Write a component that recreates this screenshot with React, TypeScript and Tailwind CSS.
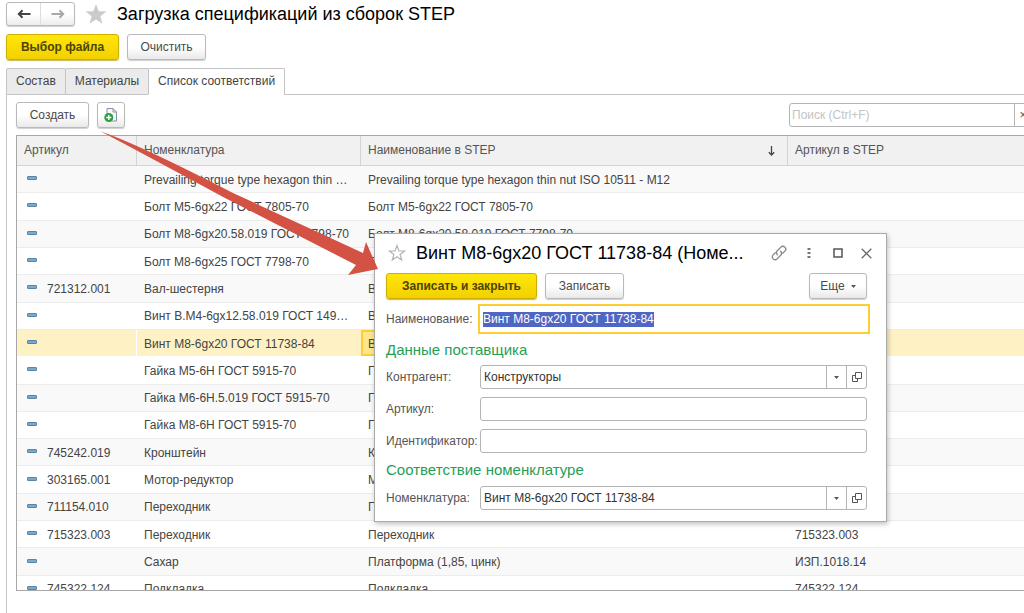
import React, { useEffect, useRef, useState } from "react";

interface Match {
    article: string;
    item: string;
    stepName: string;
    stepArticle: string;
}

const same = (item: string, article = ""): Match => ({
    article,
    item,
    stepName: item,
    stepArticle: article,
});

const matches: Match[] = [
    {
        article: "",
        item: "Prevailing torque type hexagon thin nut ISO 10511 - M12",
        stepName: "Prevailing torque type hexagon thin nut ISO 10511 - M12",
        stepArticle: "",
    },
    same("Болт М5-6gx22 ГОСТ 7805-70"),
    same("Болт М8-6gx20.58.019 ГОСТ 7798-70"),
    same("Болт М8-6gx25 ГОСТ 7798-70"),
    same("Вал-шестерня", "721312.001"),
    same("Винт В.М4-6gx12.58.019 ГОСТ 1491-80"),
    same("Винт М8-6gx20 ГОСТ 11738-84"),
    same("Гайка М5-6Н ГОСТ 5915-70"),
    same("Гайка М6-6Н.5.019 ГОСТ 5915-70"),
    same("Гайка М8-6Н ГОСТ 5915-70"),
    same("Кронштейн", "745242.019"),
    same("Мотор-редуктор", "303165.001"),
    same("Переходник", "711154.010"),
    same("Переходник", "715323.003"),
    {
        article: "",
        item: "Сахар",
        stepName: "Платформа (1,85, цинк)",
        stepArticle: "ИЗП.1018.14",
    },
    same("Подкладка", "745322.124"),
];

const tabs = ["Состав", "Материалы", "Список соответствий"];

const grayButton =
    "h-[26px] rounded-[3px] border border-[#b9b9b9] bg-linear-to-b from-white from-50% to-[#e9e9e9] text-[12px] text-[#4a4a4a] shadow-[0_1px_1px_#d0d0d0]";
const yellowButton =
    "h-[26px] rounded-[3px] border border-[#cfae00] bg-linear-to-b from-[#ffe60a] to-[#f2d000] text-[12px] font-bold text-[#4d4400] shadow-[0_1px_1px_#c8b75a]";

const Arrow: React.FC<{ back?: boolean }> = ({ back }) => (
    <svg
        viewBox="0 0 14 10"
        className={`h-[10px] w-[14px] ${back ? "text-[#444]" : "rotate-180 text-[#a8a8a8]"}`}
        fill="none"
        stroke="currentColor"
        strokeWidth="2"
    >
        <path d="M13.500 5H2M5.500 1.200 1.800 5l3.700 3.800" />
    </svg>
);

const OpenIcon: React.FC = () => (
    <svg viewBox="0 0 10 10" className="h-[10px] w-[10px]" fill="none" stroke="#555">
        <path d="M3.500 .5h6v6h-6z" />
        <path d="M3 3.500H.5v6h5V7" />
    </svg>
);

const CaretIcon: React.FC = () => (
    <svg viewBox="0 0 5 3" className="h-[3px] w-[5px]" fill="#555">
        <path d="M0 0h5L2.500 3z" />
    </svg>
);

interface FieldProps {
    id: string;
    label: string;
    defaultValue?: string;
    picker?: boolean;
}

const Field: React.FC<FieldProps> = ({ id, label, defaultValue = "", picker }) => (
    <div className="flex items-center">
        <label htmlFor={id} className="w-[94px] shrink-0 whitespace-nowrap text-[#555]">
            {label}
        </label>
        <div className="mr-[7px] flex h-6 flex-1 overflow-hidden rounded-[3px] border border-[#b4b4b4] bg-white">
            <input
                id={id}
                type="text"
                defaultValue={defaultValue}
                className="min-w-0 flex-1 px-[3px] text-[#333] outline-none"
            />
            {picker && (
                <>
                    <button
                        type="button"
                        aria-label="Выбрать"
                        className="flex w-5 items-center justify-center border-l border-[#b4b4b4]"
                    >
                        <CaretIcon />
                    </button>
                    <button
                        type="button"
                        aria-label="Открыть"
                        className="flex w-5 items-center justify-center border-l border-[#b4b4b4]"
                    >
                        <OpenIcon />
                    </button>
                </>
            )}
        </div>
    </div>
);

const MatchDialog: React.FC = () => {
    const nameRef = useRef<HTMLInputElement>(null);

    useEffect(() => {
        nameRef.current?.focus();
        nameRef.current?.select();
    }, []);

    return (
        <div
            role="dialog"
            aria-labelledby="dialog-title"
            className="absolute left-[374px] top-[233px] w-[513px] border border-[#aaa] bg-white pb-[11px] pl-[11px] pr-3 shadow-[1px_2px_5px_rgba(0,0,0,0.25)]"
        >
            <div className="flex h-[38px] items-center text-[#666]">
                <button type="button" aria-label="В избранное" className="ml-[2px]">
                    <svg
                        viewBox="0 0 18 18"
                        className="h-[18px] w-[18px]"
                        fill="none"
                        stroke="#b0b5ba"
                        strokeWidth="1.200"
                    >
                        <path d="m9 1.500 1.900 5.400 5.700.1-4.500 3.500 1.600 5.500L9 12.700 4.300 16l1.600-5.500L1.400 7l5.700-.1z" />
                    </svg>
                </button>
                <h2 id="dialog-title" className="ml-[10px] flex-1 whitespace-nowrap text-[18px] text-black">
                    Винт М8-6gx20 ГОСТ 11738-84 (Номе...
                </h2>
                <button type="button" aria-label="Ссылка">
                    <svg
                        viewBox="0 0 16 16"
                        className="h-4 w-4"
                        fill="none"
                        stroke="#888"
                        strokeWidth="1.300"
                        strokeLinecap="round"
                    >
                        <path d="M6.300 9.700a2.800 2.800 0 0 1 0-4l3.600-3.600a2.800 2.800 0 0 1 4 4L11.700 8.300" />
                        <path d="M9.700 6.300a2.800 2.800 0 0 1 0 4l-3.600 3.600a2.800 2.800 0 0 1-4-4L4.300 7.700" />
                    </svg>
                </button>
                <button type="button" aria-label="Меню" className="ml-5">
                    <svg viewBox="0 0 4 12" className="h-3 w-1" fill="#777">
                        <path d="M.5 1h3v2h-3zM.5 5h3v2h-3zM.5 9h3v2h-3z" />
                    </svg>
                </button>
                <button type="button" aria-label="Развернуть" className="ml-[22px]">
                    <svg viewBox="0 0 10 10" className="h-[10px] w-[10px]" fill="none" stroke="#555">
                        <path d="M1 1h8v8H1z" strokeWidth="1.500" />
                    </svg>
                </button>
                <button type="button" aria-label="Закрыть" className="ml-[18px] mr-[2px]">
                    <svg viewBox="0 0 11 11" className="h-[11px] w-[11px]" fill="none" stroke="#666" strokeWidth="1.300">
                        <path d="m.7.7 9.600 9.600M10.300.7.7 10.300" />
                    </svg>
                </button>
            </div>

            <div className="mt-px flex gap-2">
                <button type="button" className={`${yellowButton} w-[151px]`}>
                    Записать и закрыть
                </button>
                <button type="button" className={`${grayButton} w-[79px]`}>
                    Записать
                </button>
                <button
                    type="button"
                    className={`${grayButton} ml-auto mr-[7px] flex w-[58px] items-center justify-center gap-[6px]`}
                >
                    Еще
                    <CaretIcon />
                </button>
            </div>

            <div className="mt-[5px] flex items-center">
                <label htmlFor="name" className="w-[92px] shrink-0 text-[#555]">
                    Наименование:
                </label>
                <div className="mr-1 flex h-[30px] flex-1 items-center border-2 border-[#fbcf33] px-[3px]">
                    <input
                        id="name"
                        ref={nameRef}
                        type="text"
                        defaultValue="Винт М8-6gx20 ГОСТ 11738-84"
                        className="w-full text-[#333] outline-none selection:bg-[#4f66c4] selection:text-white"
                    />
                </div>
            </div>

            <h3 className="flex h-[31px] items-center text-[15px] text-[#1fa055]">Данные поставщика</h3>
            <div className="flex flex-col gap-2">
                <Field id="partner" label="Контрагент:" defaultValue="Конструкторы" picker />
                <Field id="article" label="Артикул:" />
                <Field id="identifier" label="Идентификатор:" />
            </div>
            <h3 className="flex h-[33px] items-center text-[15px] text-[#1fa055]">
                Соответствие номенклатуре
            </h3>
            <Field id="item" label="Номенклатура:" defaultValue="Винт М8-6gx20 ГОСТ 11738-84" picker />
        </div>
    );
};

const MatchTable: React.FC = () => {
    const [selected, setSelected] = useState<number>(6);

    return (
        <table className="h-[467px] w-full table-fixed border-separate border-spacing-0 text-left text-[#444]">
            <colgroup>
                <col className="w-[120px]" />
                <col className="w-[224px]" />
                <col className="w-[427px]" />
                <col />
            </colgroup>
            <thead>
                <tr className="h-[30px] bg-[#f1f1f1] text-[#555]">
                    <th className="border-b border-r border-[#d4d4d4] px-[7px] font-normal">Артикул</th>
                    <th className="border-b border-r border-[#d4d4d4] px-[7px] font-normal">Номенклатура</th>
                    <th className="border-b border-r border-[#d4d4d4] px-[7px] font-normal">
                        <div className="flex items-center justify-between pr-1">
                            Наименование в STEP
                            <svg viewBox="0 0 9 10" className="h-[10px] w-[9px]" fill="none" stroke="#444" strokeWidth="1.300">
                                <path d="M4.500 0v9M1.800 6.300l2.700 2.700 2.700-2.700" />
                            </svg>
                        </div>
                    </th>
                    <th className="border-b border-[#d4d4d4] px-[7px] font-normal">Артикул в STEP</th>
                </tr>
            </thead>
            <tbody>
                {matches.map((row, index) => {
                    const active = index === selected;
                    const cell = `border-b pt-[2px] ${active ? "border-white" : "border-[#ececec]"}`;
                    return (
                        <tr
                            key={index}
                            onClick={() => setSelected(index)}
                            className={active ? "bg-[#fef1c4]" : "bg-white odd:bg-[#f9f9f9]"}
                        >
                            <td className={`${cell} ${active ? "border-r" : ""} pl-[10px]`}>
                                <div className="flex items-center gap-[10px]">
                                    <span className="mb-1 h-1 w-[10px] rounded-[1px] border border-[#5585a8] bg-[#7aa9cb]" />
                                    {row.article}
                                </div>
                            </td>
                            <td className={`${cell} truncate pl-[7px] pr-2`}>{row.item}</td>
                            <td
                                className={`${cell} truncate px-[7px] ${
                                    active ? "bg-[#fde68f] shadow-[inset_0_0_0_2px_#fbcf33]" : ""
                                }`}
                            >
                                {row.stepName}
                            </td>
                            <td className={`${cell} truncate px-[7px]`}>{row.stepArticle}</td>
                        </tr>
                    );
                })}
            </tbody>
        </table>
    );
};

const App: React.FC = () => {
    const [activeTab, setActiveTab] = useState<string>(tabs[2]);

    return (
        <div className="relative flex h-screen flex-col overflow-hidden bg-white pl-[6px] pt-[2px] font-['Liberation_Sans',Arial,sans-serif] text-[12px] leading-[15px]">
            <header className="flex h-6 items-center">
                <div className="flex h-6 w-[69px] rounded-[3px] border border-[#b9b9b9] bg-linear-to-b from-white from-50% to-[#ececec] shadow-[0_1px_1px_#d0d0d0]">
                    <button
                        type="button"
                        aria-label="Назад"
                        className="flex flex-1 items-center justify-center border-r border-[#ddd]"
                    >
                        <Arrow back />
                    </button>
                    <button type="button" aria-label="Вперед" className="flex flex-1 items-center justify-center">
                        <Arrow />
                    </button>
                </div>
                <button type="button" aria-label="В избранное" className="ml-[10px]">
                    <svg viewBox="0 0 22 22" className="h-[22px] w-[22px]" fill="#c9cccf">
                        <path d="m11 1 2.700 7.200 7.700.300-6 4.800 2 7.400L11 16.500l-6.400 4.200 2-7.400-6-4.800 7.700-.300z" />
                    </svg>
                </button>
                <h1 className="ml-[10px] text-[18px] text-black">Загрузка спецификаций из сборок STEP</h1>
            </header>

            <div className="mt-2 flex gap-2">
                <button type="button" className={`${yellowButton} w-[113px]`}>
                    Выбор файла
                </button>
                <button type="button" className={`${grayButton} w-[79px]`}>
                    Очистить
                </button>
            </div>

            <div role="tablist" className="mt-2 flex h-[27px] shrink-0">
                {tabs.map(tab => (
                    <button
                        key={tab}
                        type="button"
                        role="tab"
                        aria-selected={tab === activeTab}
                        onClick={() => setActiveTab(tab)}
                        className={`-mr-px rounded-t-[2px] border border-[#c4c4c4] px-[9px] text-[#444] ${
                            tab === activeTab ? "border-b-white bg-white" : "bg-[#ebebeb]"
                        }`}
                    >
                        {tab}
                    </button>
                ))}
                <div className="flex-1 border-b border-[#c4c4c4]" />
            </div>

            <main className="flex min-h-0 flex-1 flex-col border-l border-[#c4c4c4] pb-[22px] pl-[9px] pt-[7px]">
                <div className="flex items-center">
                    <button type="button" className={`${grayButton} w-[73px]`}>
                        Создать
                    </button>
                    <button
                        type="button"
                        aria-label="Создать из файла"
                        className={`${grayButton} ml-2 flex w-7 items-center justify-center`}
                    >
                        <svg viewBox="0 0 14 16" className="h-4 w-[14px]">
                            <path d="M3 1.500h6l3.500 3.500v9H3z" fill="#f5f7fa" stroke="#8592a6" />
                            <path d="M9 1.500V5h3.500" fill="none" stroke="#8592a6" />
                            <circle cx="4.800" cy="10.500" r="4.500" fill="#2f9e44" />
                            <path d="M4.800 8v5M2.300 10.500h5" stroke="#fff" strokeWidth="1.500" />
                        </svg>
                    </button>
                    <div className="-mr-2 ml-auto flex h-6 w-[243px] rounded-[3px] border border-[#b4b4b4]">
                        <input
                            type="search"
                            aria-label="Поиск"
                            placeholder="Поиск (Ctrl+F)"
                            className="min-w-0 flex-1 px-[2px] text-[12px] outline-none placeholder:text-[#c4c4c4]"
                        />
                        <button
                            type="button"
                            aria-label="Очистить поиск"
                            className="w-[17px] border-l border-[#b4b4b4] text-[12px] text-[#555]"
                        >
                            ×
                        </button>
                    </div>
                </div>

                <div className="mt-[7px] min-h-0 flex-1 overflow-hidden border-y border-l border-[#a8a8a8]">
                    <MatchTable />
                </div>
            </main>

            <MatchDialog />

            <svg
                viewBox="0 0 280 146"
                className="pointer-events-none absolute left-[100px] top-[131px] h-[146px] w-[280px]"
                fill="#d35244"
            >
                <path d="M0 0 Q40 14 133 62 L263 122 L266 111 L278 138 L248 144 L256 134 L125 67 Q40 21 0 0z" />
            </svg>
        </div>
    );
};

export default App;
